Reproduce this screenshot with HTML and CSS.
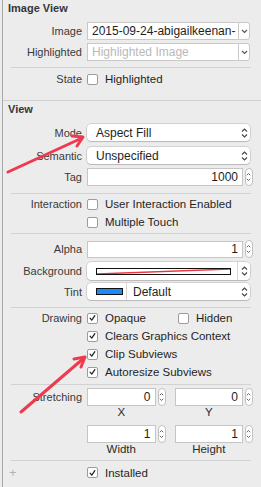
FILE: index.html
```html
<!DOCTYPE html>
<html lang="en">
<head>
    <meta charset="UTF-8">
    <meta name="viewport" content="width=device-width, initial-scale=1.0">
    <title>Attributes Inspector</title>
    <link rel="stylesheet" href="styles.css">
</head>
<body>
    <div class="panel">
        <section class="sec sec-image">
            <div class="sec-title">Image View</div>
            <div class="row field-row first">
                <span class="lbl">Image</span>
                <div class="combo">
                    <span class="combo-val">2015-09-24-abigailkeenan-</span>
                    <span class="combo-btn"><svg width="7" height="5" viewBox="0 0 7 5"><polyline points="1,1 3.5,3.5 6,1" fill="none" stroke="#555" stroke-width="1.1"/></svg></span>
                </div>
            </div>
            <div class="row field-row gap3">
                <span class="lbl">Highlighted</span>
                <div class="combo">
                    <span class="combo-val placeholder">Highlighted Image</span>
                    <span class="combo-btn"><svg width="7" height="5" viewBox="0 0 7 5"><polyline points="1,1 3.5,3.5 6,1" fill="none" stroke="#555" stroke-width="1.1"/></svg></span>
                </div>
            </div>
            <div class="sep sep-state"></div>
            <div class="row check-row state-row">
                <span class="lbl">State</span>
                <label class="check"><span class="box"></span>Highlighted</label>
            </div>
        </section>

        <section class="sec sec-view">
            <div class="sec-title">View</div>
            <div class="row pop-row mode-row">
                <span class="lbl">Mode</span>
                <div class="popup">
                    <span class="popup-val">Aspect Fill</span>
                    <span class="updown"><svg width="7" height="10" viewBox="0 0 7 10"><polyline points="1,3.5 3.5,1 6,3.5" fill="none" stroke="#444" stroke-width="1.1"/><polyline points="1,6.5 3.5,9 6,6.5" fill="none" stroke="#444" stroke-width="1.1"/></svg></span>
                </div>
            </div>
            <div class="row pop-row semantic-row">
                <span class="lbl">Semantic</span>
                <div class="popup">
                    <span class="popup-val">Unspecified</span>
                    <span class="updown"><svg width="7" height="10" viewBox="0 0 7 10"><polyline points="1,3.5 3.5,1 6,3.5" fill="none" stroke="#444" stroke-width="1.1"/><polyline points="1,6.5 3.5,9 6,6.5" fill="none" stroke="#444" stroke-width="1.1"/></svg></span>
                </div>
            </div>
            <div class="row field-row tag-row">
                <span class="lbl">Tag</span>
                <div class="num">
                    <span class="num-val">1000</span>
                    <span class="stepper"><svg width="8" height="18" viewBox="0 0 8 18"><polyline points="2,7 4,5 6,7" fill="none" stroke="#555" stroke-width="1"/><polyline points="2,11 4,13 6,11" fill="none" stroke="#555" stroke-width="1"/></svg></span>
                </div>
            </div>

            <div class="sep sep-interaction"></div>
            <div class="row check-row interaction-row">
                <span class="lbl">Interaction</span>
                <label class="check"><span class="box"></span>User Interaction Enabled</label>
            </div>
            <div class="row check-row touch-row">
                <span class="lbl"></span>
                <label class="check"><span class="box"></span>Multiple Touch</label>
            </div>

            <div class="sep sep-alpha"></div>
            <div class="row field-row alpha-row">
                <span class="lbl">Alpha</span>
                <div class="num">
                    <span class="num-val">1</span>
                    <span class="stepper"><svg width="8" height="18" viewBox="0 0 8 18"><polyline points="2,7 4,5 6,7" fill="none" stroke="#555" stroke-width="1"/><polyline points="2,11 4,13 6,11" fill="none" stroke="#555" stroke-width="1"/></svg></span>
                </div>
            </div>
            <div class="row pop-row bg-row">
                <span class="lbl">Background</span>
                <div class="popup color-popup">
                    <span class="well-area">
                        <span class="well clear-well"><svg width="100%" height="100%" viewBox="0 0 100 10" preserveAspectRatio="none"><line x1="0" y1="10" x2="100" y2="0" stroke="#e8343c" stroke-width="1.4" vector-effect="non-scaling-stroke"/></svg></span>
                    </span>
                    <span class="updown divided"><svg width="7" height="10" viewBox="0 0 7 10"><polyline points="1,3.5 3.5,1 6,3.5" fill="none" stroke="#444" stroke-width="1.1"/><polyline points="1,6.5 3.5,9 6,6.5" fill="none" stroke="#444" stroke-width="1.1"/></svg></span>
                </div>
            </div>
            <div class="row pop-row tint-row">
                <span class="lbl">Tint</span>
                <div class="popup tint-popup">
                    <span class="tint-area"><span class="well blue-well"></span></span>
                    <span class="popup-val">Default</span>
                    <span class="updown"><svg width="7" height="10" viewBox="0 0 7 10"><polyline points="1,3.5 3.5,1 6,3.5" fill="none" stroke="#444" stroke-width="1.1"/><polyline points="1,6.5 3.5,9 6,6.5" fill="none" stroke="#444" stroke-width="1.1"/></svg></span>
                </div>
            </div>

            <div class="sep sep-drawing"></div>
            <div class="row draw-row first-draw">
                <span class="lbl">Drawing</span>
                <div class="pair">
                    <label class="check"><span class="box on"><svg width="10" height="10" viewBox="0 0 10 10"><polyline points="2.3,5.2 4.2,7.3 7.6,2.4" fill="none" stroke="#222" stroke-width="1.4" stroke-linecap="round" stroke-linejoin="round"/></svg></span>Opaque</label>
                    <label class="check hidden-check"><span class="box"></span>Hidden</label>
                </div>
            </div>
            <div class="row draw-row">
                <span class="lbl"></span>
                <label class="check"><span class="box on"><svg width="10" height="10" viewBox="0 0 10 10"><polyline points="2.3,5.2 4.2,7.3 7.6,2.4" fill="none" stroke="#222" stroke-width="1.4" stroke-linecap="round" stroke-linejoin="round"/></svg></span>Clears Graphics Context</label>
            </div>
            <div class="row draw-row">
                <span class="lbl"></span>
                <label class="check"><span class="box on"><svg width="10" height="10" viewBox="0 0 10 10"><polyline points="2.3,5.2 4.2,7.3 7.6,2.4" fill="none" stroke="#222" stroke-width="1.4" stroke-linecap="round" stroke-linejoin="round"/></svg></span>Clip Subviews</label>
            </div>
            <div class="row draw-row">
                <span class="lbl"></span>
                <label class="check"><span class="box on"><svg width="10" height="10" viewBox="0 0 10 10"><polyline points="2.3,5.2 4.2,7.3 7.6,2.4" fill="none" stroke="#222" stroke-width="1.4" stroke-linecap="round" stroke-linejoin="round"/></svg></span>Autoresize Subviews</label>
            </div>

            <div class="sep sep-stretch"></div>
            <div class="row field-row stretch-row">
                <span class="lbl">Stretching</span>
                <div class="quad">
                    <div class="num"><span class="num-val">0</span><span class="stepper"><svg width="8" height="18" viewBox="0 0 8 18"><polyline points="2,7 4,5 6,7" fill="none" stroke="#555" stroke-width="1"/><polyline points="2,11 4,13 6,11" fill="none" stroke="#555" stroke-width="1"/></svg></span></div>
                    <div class="num"><span class="num-val">0</span><span class="stepper"><svg width="8" height="18" viewBox="0 0 8 18"><polyline points="2,7 4,5 6,7" fill="none" stroke="#555" stroke-width="1"/><polyline points="2,11 4,13 6,11" fill="none" stroke="#555" stroke-width="1"/></svg></span></div>
                </div>
            </div>
            <div class="row cap-row">
                <span class="lbl"></span>
                <div class="quad"><span class="cap">X</span><span class="cap">Y</span></div>
            </div>
            <div class="row field-row size-row">
                <span class="lbl"></span>
                <div class="quad">
                    <div class="num"><span class="num-val">1</span><span class="stepper"><svg width="8" height="18" viewBox="0 0 8 18"><polyline points="2,7 4,5 6,7" fill="none" stroke="#555" stroke-width="1"/><polyline points="2,11 4,13 6,11" fill="none" stroke="#555" stroke-width="1"/></svg></span></div>
                    <div class="num"><span class="num-val">1</span><span class="stepper"><svg width="8" height="18" viewBox="0 0 8 18"><polyline points="2,7 4,5 6,7" fill="none" stroke="#555" stroke-width="1"/><polyline points="2,11 4,13 6,11" fill="none" stroke="#555" stroke-width="1"/></svg></span></div>
                </div>
            </div>
            <div class="row cap-row">
                <span class="lbl"></span>
                <div class="quad"><span class="cap">Width</span><span class="cap">Height</span></div>
            </div>

            <div class="sep sep-installed"></div>
            <div class="row check-row installed-row">
                <span class="lbl"><span class="plus">+</span></span>
                <label class="check"><span class="box on"><svg width="10" height="10" viewBox="0 0 10 10"><polyline points="2.3,5.2 4.2,7.3 7.6,2.4" fill="none" stroke="#222" stroke-width="1.4" stroke-linecap="round" stroke-linejoin="round"/></svg></span>Installed</label>
            </div>
        </section>
    </div>

    <!-- annotation arrows drawn over the screenshot -->
    <svg class="arrows" width="261" height="487" viewBox="0 0 261 487">
        <g fill="none" stroke="#ee3a4e" stroke-width="3" stroke-linecap="round" stroke-linejoin="round">
            <line x1="8" y1="172" x2="82" y2="138"/>
            <polyline points="72,136 83,137 77,146"/>
            <line x1="21" y1="412" x2="84" y2="358"/>
            <polyline points="74,359 85,357 81,367"/>
        </g>
    </svg>
</body>
</html>
```

FILE: styles.css
```css
body {
    margin: 0;
    padding: 0;
    background-color: #ececec;
    font-family: "Liberation Sans", Arial, sans-serif;
    font-size: 11px;
    color: #2b2b2b;
    position: relative;
    width: 261px;
    height: 487px;
    overflow: hidden;
}
.panel {
    margin-left: 2px;
    height: 487px;
    border-left: 1px solid #a9a9a9;
    background: #ececec;
}
.sec-title {
    height: 17px;
    line-height: 17px;
    padding-left: 5px;
    font-weight: bold;
    color: #363636;
}
.sec-image {
    height: 100px;
}
.sec-view {
    border-top: 1px solid #cfcfcf;
}
.row {
    display: grid;
    grid-template-columns: 79px 1fr;
    column-gap: 5px;
    align-items: center;
    padding-right: 8px;
}
.lbl {
    text-align: right;
    color: #3a3a3a;
    white-space: nowrap;
}
.sep {
    height: 1px;
    margin-left: 8px;
    margin-right: 10px;
    background: #d2d2d2;
}

/* combo box */
.field-row { height: 18px; }
.first { margin-top: 5px; }
.gap3 { margin-top: 3px; }
.combo {
    display: flex;
    height: 18px;
    margin-right: 3px;
}
.combo-val {
    flex: 1;
    background: #fff;
    border: 1px solid #c8c8c8;
    border-right: none;
    padding-left: 4px;
    font-size: 12px;
    line-height: 16px;
    white-space: nowrap;
    overflow: hidden;
    color: #1e1e1e;
}
.combo-val.placeholder { color: #b9b9b9; }
.combo-btn {
    width: 10px;
    background: #fff;
    border: 1px solid #c8c8c8;
    border-radius: 0 3px 3px 0;
    display: flex;
    align-items: center;
    justify-content: center;
}
.sep-state { margin-top: 6px; }
.check-row { height: 14px; }
.state-row { margin-top: 4px; }

/* checkbox */
.check {
    display: flex;
    align-items: center;
    gap: 7px;
    font-size: 11.5px;
    color: #1f1f1f;
    white-space: nowrap;
}
.box {
    width: 9px;
    height: 9px;
    background: #fff;
    border: 1px solid #9c9c9c;
    border-radius: 2px;
    display: flex;
    align-items: center;
    justify-content: center;
    flex-shrink: 0;
}
.box svg { display: block; }

/* pop-up buttons */
.pop-row { height: 17px; }
.mode-row { margin-top: 6px; }
.semantic-row { margin-top: 6px; }
.popup {
    display: flex;
    align-items: center;
    height: 17px;
    margin-right: 3px;
    background: #fff;
    border-radius: 4px;
    box-shadow: 0 0 0 0.5px rgba(0, 0, 0, 0.22), 0 1px 1px rgba(0, 0, 0, 0.12);
}
.popup-val {
    flex: 1;
    padding-left: 9px;
    font-size: 12px;
    color: #1e1e1e;
}
.updown {
    width: 12px;
    display: flex;
    align-items: center;
    justify-content: center;
}
.updown svg { display: block; }

/* number fields */
.tag-row { margin-top: 4px; }
.num {
    display: flex;
    align-items: center;
    gap: 2px;
}
.num-val {
    flex: 1;
    height: 18px;
    box-sizing: border-box;
    background: #fff;
    border: 1px solid #c6c6c6;
    text-align: right;
    padding-right: 4px;
    font-size: 12px;
    line-height: 16px;
    color: #1e1e1e;
}
.stepper {
    width: 8px;
    height: 18px;
    box-sizing: border-box;
    background: #fff;
    border: 1px solid #c2c2c2;
    border-radius: 4px;
    display: flex;
}
.stepper svg { display: block; margin-left: -1px; margin-top: -1px; }

.sep-interaction { margin-top: 7px; }
.interaction-row { margin-top: 3px; }
.touch-row { margin-top: 4px; }
.sep-alpha { margin-top: 4px; }
.alpha-row { height: 17px; margin-top: 6px; }
.alpha-row .num-val { height: 17px; line-height: 15px; }

/* colour wells */
.bg-row { height: 18px; margin-top: 5px; }
.bg-row .popup { height: 18px; }
.well-area {
    flex: 1;
    padding-left: 9px;
    padding-right: 6px;
    display: flex;
    align-items: center;
}
.well {
    display: block;
    height: 7px;
    box-sizing: border-box;
    border: 1px solid #111;
    background: #fff;
}
.clear-well { flex: 1; }
.clear-well svg { display: block; }
.updown.divided {
    align-self: stretch;
    border-left: 1px solid #d6d6d6;
}
.tint-row { margin-top: 3px; }
.tint-area {
    width: 40px;
    height: 17px;
    box-sizing: border-box;
    padding-left: 9px;
    border-right: 1px solid #d6d6d6;
    display: flex;
    align-items: center;
}
.blue-well {
    width: 27px;
    background: #1a8cf5;
}
.tint-popup .popup-val { padding-left: 6px; }

/* drawing */
.sep-drawing { margin-top: 7px; }
.draw-row { height: 18px; }
.first-draw { margin-top: 1px; }
.pair {
    display: flex;
    gap: 32px;
}
.sep-stretch { margin-top: 3px; }

/* stretching */
.stretch-row { margin-top: 3px; }
.quad {
    display: grid;
    grid-template-columns: 1fr 1fr;
    column-gap: 9px;
}
.cap-row { height: 12px; }
.cap {
    text-align: center;
    line-height: 12px;
    padding-right: 10px;
    font-size: 11.5px;
    color: #2a2a2a;
}
.size-row { margin-top: 7px; }
.sep-installed { margin-top: 5px; }
.installed-row { margin-top: 4px; }
.plus {
    display: block;
    text-align: left;
    padding-left: 6px;
    font-size: 13px;
    color: #b4b4b4;
}

.arrows {
    position: absolute;
    left: 0;
    top: 0;
    pointer-events: none;
}
```
